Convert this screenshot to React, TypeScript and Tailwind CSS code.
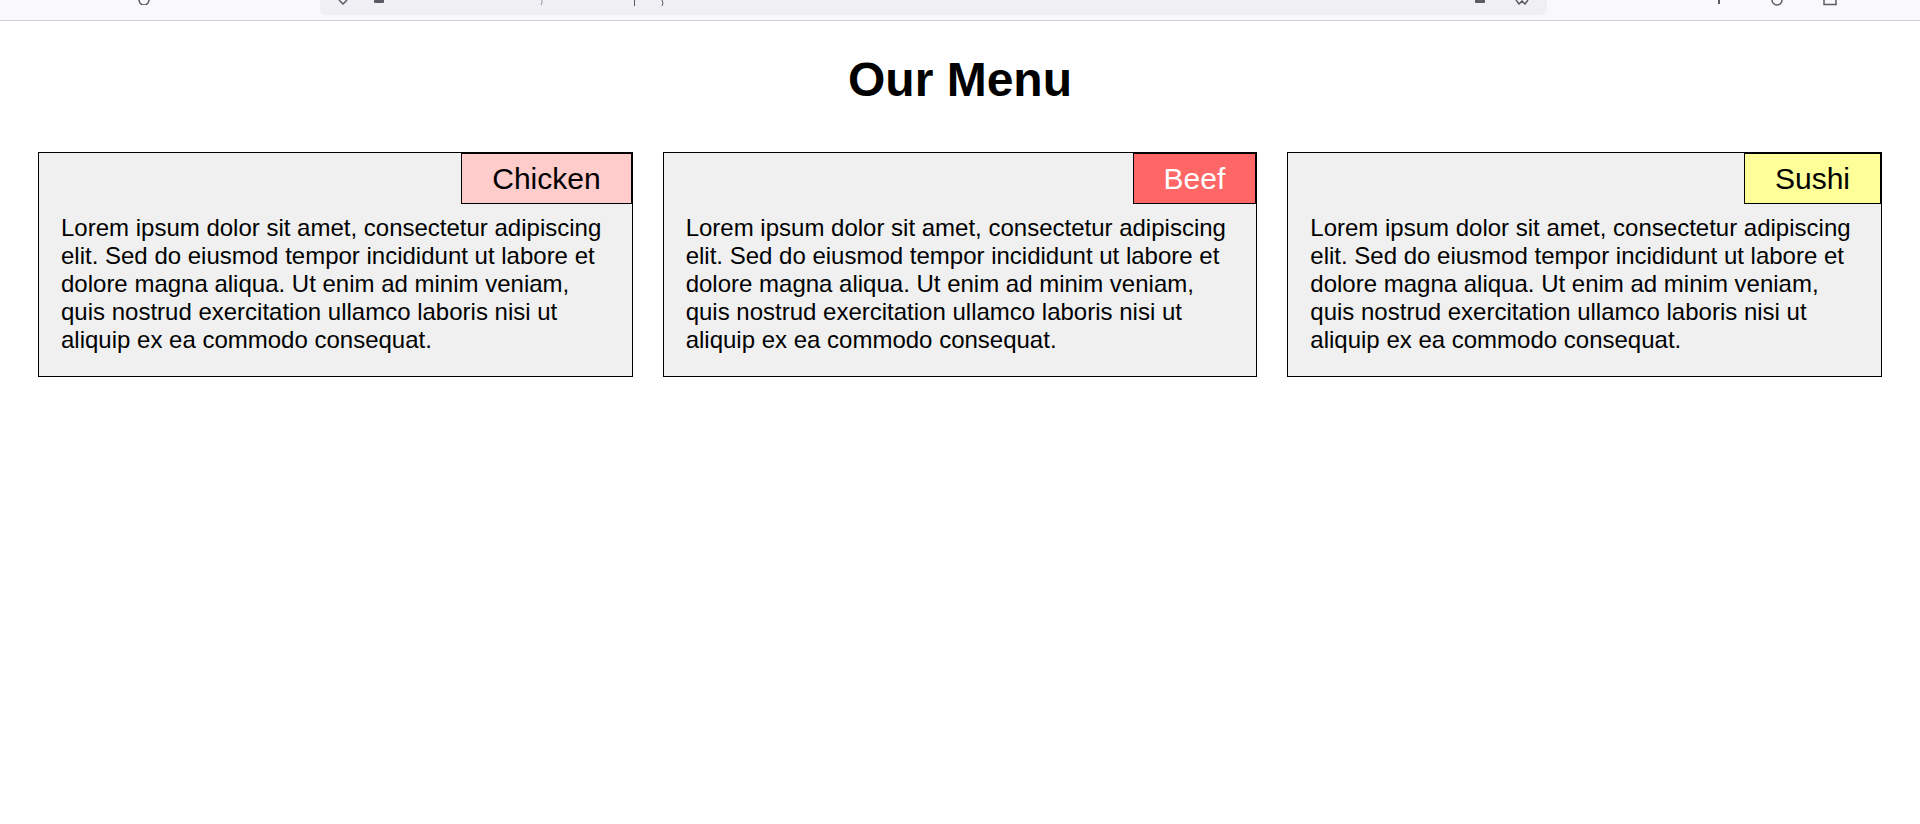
import React from "react";

const items = [
  { name: "Chicken", cls: "bg-[#ffcccc] text-black" },
  { name: "Beef", cls: "bg-[#ff6666] text-white" },
  { name: "Sushi", cls: "bg-[#ffff99] text-black" },
];

const lorem =
  "Lorem ipsum dolor sit amet, consectetur adipiscing elit. Sed do eiusmod tempor incididunt ut labore et dolore magna aliqua. Ut enim ad minim veniam, quis nostrud exercitation ullamco laboris nisi ut aliquip ex ea commodo consequat.";

function Chrome() {
  return (
    <div className="flex items-start h-[21px] bg-[#f9f9fb] border-b border-[#cfcfd8]">
      <div className="w-[137px]" />
      <svg width="14" height="5" viewBox="0 0 14 5" className="shrink-0">
        <path d="M2 0 A5 5 0 0 0 12 0" fill="none" stroke="#5b5b66" strokeWidth="1.5" />
      </svg>
      <div className="w-[169px]" />
      <div className="w-[1227px] h-[15px] bg-[#f0f0f4] rounded-b-[6px] flex items-start">
        <div className="w-[18px]" />
        <svg width="10" height="5" viewBox="0 0 10 5" className="shrink-0">
          <path d="M1 0 L5 4 L9 0" fill="none" stroke="#5b5b66" strokeWidth="1.5" />
        </svg>
        <div className="w-[26px]" />
        <div className="w-[10px] h-[3px] bg-[#5b5b66] rounded-b-[1px]" />
        <div className="w-[156px]" />
        <svg width="4" height="5" viewBox="0 0 4 5" className="shrink-0">
          <path d="M2 0 Q2.5 3 1 5" fill="none" stroke="#8f8f9d" strokeWidth="1" />
        </svg>
        <div className="w-[90px]" />
        <div className="w-[1px] h-[6px] bg-[#5b5b66]" />
        <div className="w-[26px]" />
        <svg width="6" height="6" viewBox="0 0 6 6" className="shrink-0">
          <path d="M1 0 Q3 3 1 6" fill="none" stroke="#5b5b66" strokeWidth="1" />
        </svg>
        <div className="flex-1" />
        <div className="w-[10px] h-[3px] bg-[#5b5b66] rounded-b-[1px]" />
        <div className="w-[30px]" />
        <svg width="14" height="5" viewBox="0 0 14 5" className="shrink-0">
          <path d="M1 0 L4 4 L7 1 L10 4 L13 0" fill="none" stroke="#5b5b66" strokeWidth="1.5" />
        </svg>
        <div className="w-[18px]" />
      </div>
      <div className="w-[171px]" />
      <div className="w-[2px] h-[4px] bg-[#5b5b66]" />
      <div className="w-[50px]" />
      <svg width="14" height="6" viewBox="0 0 14 6" className="shrink-0">
        <path d="M2 0 A5 5 0 0 0 12 0" fill="none" stroke="#5b5b66" strokeWidth="1.5" />
      </svg>
      <div className="w-[39px]" />
      <svg width="14" height="6" viewBox="0 0 14 6" className="shrink-0">
        <path d="M1 0 L1 4.5 L13 4.5 L13 0" fill="none" stroke="#5b5b66" strokeWidth="1.5" />
      </svg>
    </div>
  );
}

export default function App() {
  return (
    <div className="min-h-[824px] bg-white text-black font-['Liberation_Sans',Arial,sans-serif]">
      <Chrome />
      <h1 className="mt-[31px] mb-[45px] text-center text-[48px] leading-[55px] font-bold">
        Our Menu
      </h1>
      <div className="grid grid-cols-3 gap-[30px] px-[38px]">
        {items.map((it) => (
          <div key={it.name} className="flex flex-col border border-black bg-[#f0f0f0]">
            <div
              className={`self-end border border-black px-[30px] py-[8px] text-[30px] leading-[33px] ${it.cls}`}
            >
              {it.name}
            </div>
            <p className="px-[22px] pt-[10px] pb-[22px] text-[24px] leading-[28px]">{lorem}</p>
          </div>
        ))}
      </div>
    </div>
  );
}
